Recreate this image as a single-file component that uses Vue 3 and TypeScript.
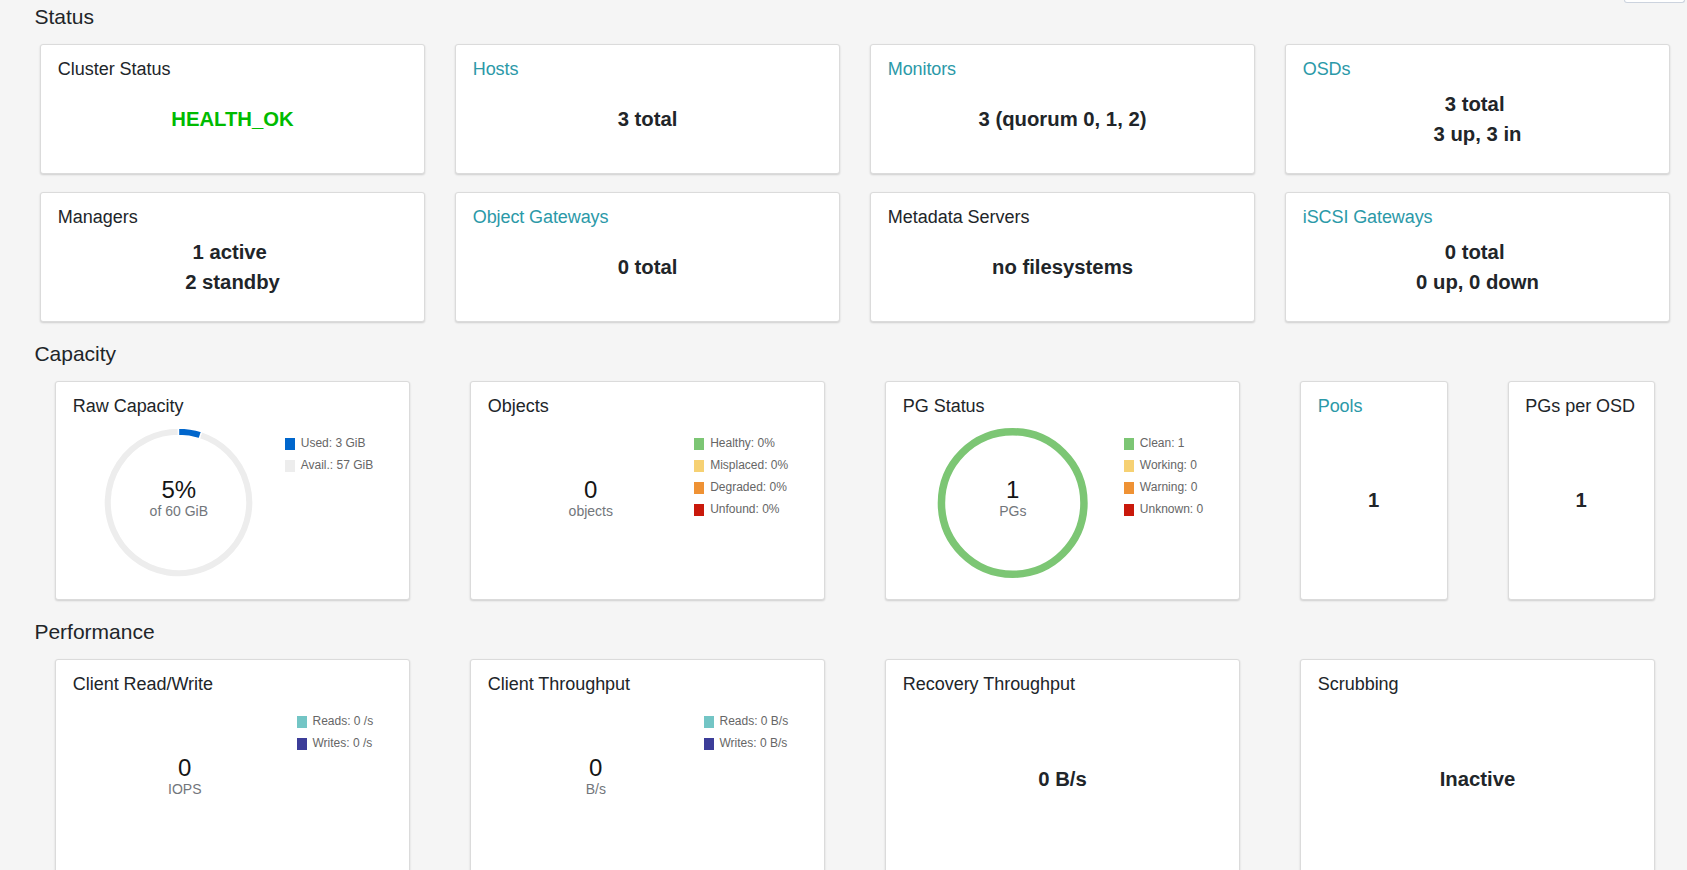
<script setup lang="ts">
interface InfoCard {
  title: string
  link?: boolean
  lines: string[]
  tone?: 'ok'
}

interface LegendItem {
  label: string
  color: string
}

interface ChartCard {
  title: string
  value: string
  unit: string
  legend: LegendItem[]
  ring?: 'usage' | 'full'
}

// Multi-line values keep the trailing space that separates their parts.
const statusCards: InfoCard[] = [
  { title: 'Cluster Status', lines: ['HEALTH_OK'], tone: 'ok' },
  { title: 'Hosts', link: true, lines: ['3 total'] },
  { title: 'Monitors', link: true, lines: ['3 (quorum 0, 1, 2)'] },
  { title: 'OSDs', link: true, lines: ['3 total ', '3 up, 3 in'] },
  { title: 'Managers', lines: ['1 active ', '2 standby'] },
  { title: 'Object Gateways', link: true, lines: ['0 total'] },
  { title: 'Metadata Servers', lines: ['no filesystems'] },
  { title: 'iSCSI Gateways', link: true, lines: ['0 total ', '0 up, 0 down'] },
]

const green = '#7cc674'
const yellow = '#f6d173'
const orange = '#ef9234'
const red = '#c9190b'
const teal = '#73c5c5'
const indigo = '#3c3d99'

const capacityCharts: ChartCard[] = [
  {
    title: 'Raw Capacity',
    value: '5%',
    unit: 'of 60 GiB',
    ring: 'usage',
    legend: [
      { label: 'Used: 3 GiB', color: '#0066cc' },
      { label: 'Avail.: 57 GiB', color: '#ededed' },
    ],
  },
  {
    title: 'Objects',
    value: '0',
    unit: 'objects',
    legend: [
      { label: 'Healthy: 0%', color: green },
      { label: 'Misplaced: 0%', color: yellow },
      { label: 'Degraded: 0%', color: orange },
      { label: 'Unfound: 0%', color: red },
    ],
  },
  {
    title: 'PG Status',
    value: '1',
    unit: 'PGs',
    ring: 'full',
    legend: [
      { label: 'Clean: 1', color: green },
      { label: 'Working: 0', color: yellow },
      { label: 'Warning: 0', color: orange },
      { label: 'Unknown: 0', color: red },
    ],
  },
]

const capacityCounts: InfoCard[] = [
  { title: 'Pools', link: true, lines: ['1'] },
  { title: 'PGs per OSD', lines: ['1'] },
]

const performanceCharts: ChartCard[] = [
  {
    title: 'Client Read/Write',
    value: '0',
    unit: 'IOPS',
    legend: [
      { label: 'Reads: 0 /s', color: teal },
      { label: 'Writes: 0 /s', color: indigo },
    ],
  },
  {
    title: 'Client Throughput',
    value: '0',
    unit: 'B/s',
    legend: [
      { label: 'Reads: 0 B/s', color: teal },
      { label: 'Writes: 0 B/s', color: indigo },
    ],
  },
]

const performanceValues: InfoCard[] = [
  { title: 'Recovery Throughput', lines: ['0 B/s'] },
  { title: 'Scrubbing', lines: ['Inactive'] },
]

// Closed path of a donut slice, angles in degrees clockwise from the top.
function slice(from: number, to: number): string {
  const outer = 74.5
  const inner = 67
  const at = (r: number, deg: number): string => {
    const a = (deg * Math.PI) / 180
    return `${(74.5 + r * Math.sin(a)).toFixed(3)} ${(74.5 - r * Math.cos(a)).toFixed(3)}`
  }
  const large = to - from > 180 ? 1 : 0
  return `M${at(outer, from)}A${outer} ${outer} 0 ${large} 1 ${at(outer, to)}L${at(inner, to)}A${inner} ${inner} 0 ${large} 0 ${at(inner, from)}Z`
}
</script>

<template>
  <div class="dashboard">
    <div class="toolbar"><button class="refresh" type="button" aria-label="Refresh"></button></div>

    <h2 class="heading first">Status</h2>
    <section class="grid status">
      <article v-for="c in statusCards" :key="c.title" class="card">
        <h3 class="title"><a v-if="c.link" class="link">{{ c.title }}</a><template v-else>{{ c.title }}</template></h3>
        <div class="value" :class="c.tone">
          <div v-for="l in c.lines" :key="l" class="line">{{ l }}</div>
        </div>
      </article>
    </section>

    <h2 class="heading">Capacity</h2>
    <section class="grid wide">
      <article v-for="c in capacityCharts" :key="c.title" class="card tall">
        <h3 class="title">{{ c.title }}</h3>
        <div class="chart">
          <div class="plot">
            <svg width="150" height="150" viewBox="0 0 150 150">
              <circle v-if="c.ring === 'full'" cx="74.7" cy="75" r="71.25" fill="none" stroke="#7cc674" stroke-width="7.5" />
              <g v-if="c.ring === 'usage'" stroke="#fff" stroke-width="1.4">
                <path :d="slice(18, 360)" fill="#ededed" />
                <path :d="slice(0, 18)" fill="#0066cc" />
              </g>
              <text class="number" x="74.8" y="69.5">{{ c.value }}</text>
              <text class="unit" x="74.8" y="88">{{ c.unit }}</text>
            </svg>
          </div>
          <ul class="legend">
            <li v-for="i in c.legend" :key="i.label" class="entry">
              <span class="swatch" :style="{ background: i.color }"></span><span>{{ i.label }}</span>
            </li>
          </ul>
        </div>
      </article>
      <div class="pair">
        <article v-for="c in capacityCounts" :key="c.title" class="card tall">
          <h3 class="title"><a v-if="c.link" class="link">{{ c.title }}</a><template v-else>{{ c.title }}</template></h3>
          <div class="value">
            <div v-for="l in c.lines" :key="l" class="line">{{ l }}</div>
          </div>
        </article>
      </div>
    </section>

    <h2 class="heading">Performance</h2>
    <section class="grid wide performance">
      <article v-for="c in performanceCharts" :key="c.title" class="card tall">
        <h3 class="title">{{ c.title }}</h3>
        <div class="chart">
          <div class="plot">
            <svg width="150" height="150" viewBox="0 0 150 150">
              <text class="number" x="74.8" y="69.5">{{ c.value }}</text>
              <text class="unit" x="74.8" y="88">{{ c.unit }}</text>
            </svg>
          </div>
          <ul class="legend">
            <li v-for="i in c.legend" :key="i.label" class="entry">
              <span class="swatch" :style="{ background: i.color }"></span><span>{{ i.label }}</span>
            </li>
          </ul>
        </div>
      </article>
      <article v-for="c in performanceValues" :key="c.title" class="card tall">
        <h3 class="title">{{ c.title }}</h3>
        <div class="value">
          <div v-for="l in c.lines" :key="l" class="line">{{ l }}</div>
        </div>
      </article>
    </section>
  </div>
</template>

<style>
html,
body {
  margin: 0;
  background: #f5f5f5;
}
</style>

<style scoped>
.dashboard {
  width: 1687px;
  height: 870px;
  overflow: hidden;
  background: #f5f5f5;
  color: #212529;
  font-family: "Liberation Sans", Arial, Helvetica, sans-serif;
}

.toolbar {
  display: flex;
  justify-content: flex-end;
  height: 3px;
  padding-right: 2px;
}

.refresh {
  box-sizing: border-box;
  width: 61px;
  height: 3px;
  padding: 0;
  border: 1px solid #ccd3de;
  border-top: 0;
  border-radius: 0 0 3px 3px;
  background: #fff;
}

.heading {
  margin: 19px 0 15px 34.4px;
  font-size: 21px;
  font-weight: 400;
  line-height: 25px;
}

.heading.first {
  margin-top: 1px;
}

.grid {
  display: grid;
  width: 1660px;
  margin-left: 25px;
  box-sizing: border-box;
}

.status {
  grid-template-columns: repeat(4, 385px);
  gap: 18px 30px;
  padding: 0 15px;
}

.wide {
  grid-template-columns: repeat(4, 355px);
  column-gap: 60px;
  padding: 0 30px;
}

.pair {
  display: grid;
  grid-template-columns: 1fr 1fr;
  column-gap: 60px;
}

.card {
  box-sizing: border-box;
  height: 130px;
  border: 1px solid #dbdbdb;
  border-radius: 3px;
  background: #fff;
  box-shadow: 0 1px 2px rgba(0, 0, 0, 0.16);
}

.tall {
  height: 219px;
}

.title {
  height: 43px;
  box-sizing: border-box;
  margin: 0;
  padding: 13px 0 0 16.8px;
  font-size: 18px;
  font-weight: 400;
  line-height: 22px;
  letter-spacing: -0.03px;
  white-space: nowrap;
}

.link {
  color: #2b99a8;
  letter-spacing: -0.1px;
}

.value {
  display: flex;
  flex-direction: column;
  justify-content: center;
  height: 62px;
  font-size: 20.3px;
  font-weight: 700;
  line-height: 30px;
  text-align: center;
}

.tall .value {
  height: 150px;
}

.performance .value {
  height: 152px;
}

.line {
  white-space: pre;
}

.ok {
  color: #00bb00;
}

.chart {
  display: flex;
  padding: 3px 35.8px 0 35px;
}

.plot {
  display: flex;
  flex: 1;
  justify-content: center;
  padding-right: 18px;
}

.plot svg {
  flex: none;
  margin: 0 -20px;
  overflow: visible;
}

.number,
.unit {
  text-anchor: middle;
}

.number {
  fill: #151515;
  font-size: 24px;
}

.unit {
  fill: #72767b;
  font-size: 14px;
}

.legend {
  flex: none;
  margin: 0;
  padding: 5px 0 0;
  list-style: none;
}

.entry {
  display: flex;
  align-items: center;
  gap: 6px;
  height: 22px;
  color: #666;
  font-size: 12px;
  line-height: 16px;
}

.entry span:last-child {
  margin-top: -2px;
}

.swatch {
  width: 10px;
  height: 12px;
}
</style>
